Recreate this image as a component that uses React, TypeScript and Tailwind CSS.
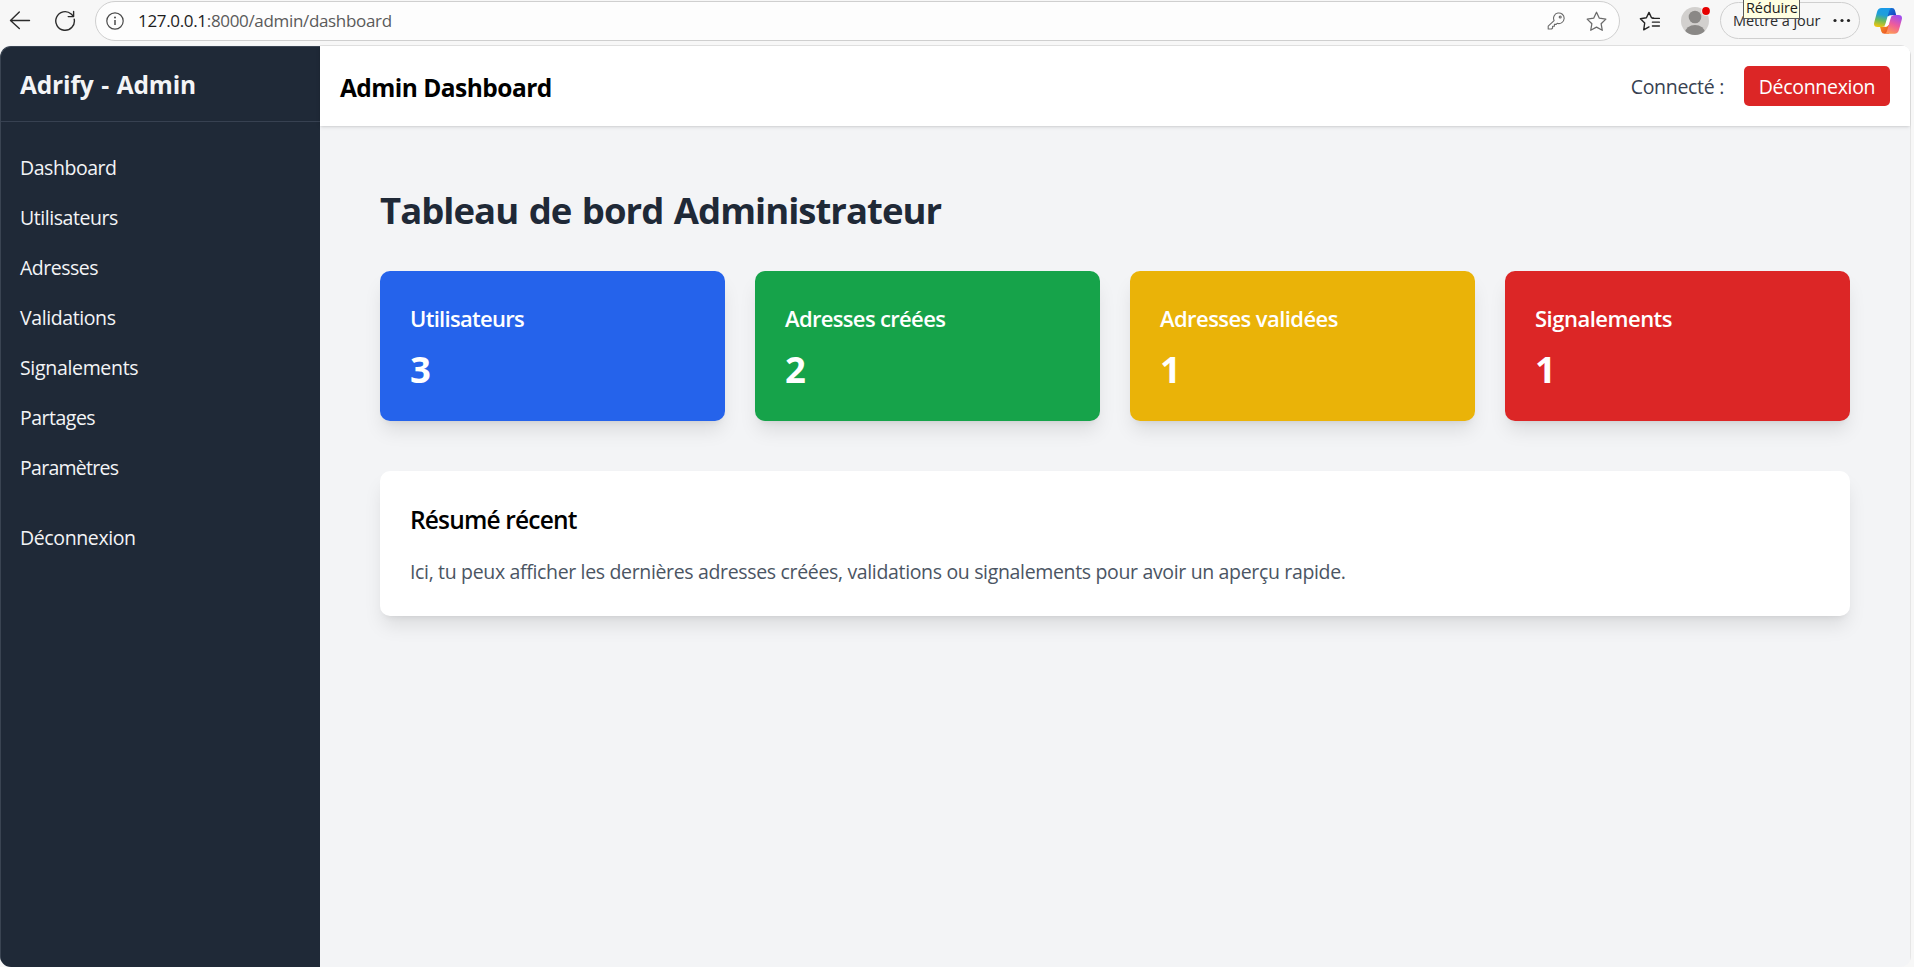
import React from "react";

const navLinks = [
  { label: "Dashboard", tracking: "tracking-[-0.45px]" },
  { label: "Utilisateurs", tracking: "tracking-[-0.45px]" },
  { label: "Adresses", tracking: "tracking-[-0.5px]" },
  { label: "Validations", tracking: "tracking-[-0.4px]" },
  { label: "Signalements", tracking: "tracking-[-0.32px]" },
  { label: "Partages", tracking: "tracking-[-0.5px]" },
  { label: "Paramètres", tracking: "tracking-[-0.72px]" },
];

const stats = [
  { label: "Utilisateurs", value: 3, color: "bg-[#2563eb]", tracking: "tracking-[-0.7px]" },
  { label: "Adresses créées", value: 2, color: "bg-[#16a34a]", tracking: "tracking-[-0.66px]" },
  { label: "Adresses validées", value: 1, color: "bg-[#eab308]", tracking: "tracking-[-0.57px]" },
  { label: "Signalements", value: 1, color: "bg-[#dc2626]", tracking: "tracking-[-0.5px]" },
];

const STAR = "M10 1.2 L12.7 6.9 L18.9 7.7 L14.4 12.1 L15.5 18.4 L10 15.4 L4.5 18.4 L5.6 12.1 L1.1 7.7 L7.3 6.9 Z";

function CopilotLogo() {
  return (
    <svg className="ml-[14px] h-[28px] w-[28px]" viewBox="0 0 28 28">
      <defs>
        <linearGradient id="cpLeft" x1="0.5" y1="0" x2="0.3" y2="1">
          <stop offset="0" stopColor="#1a9be8" />
          <stop offset="0.35" stopColor="#1f9fd8" />
          <stop offset="0.65" stopColor="#6cbb5a" />
          <stop offset="1" stopColor="#f2c50f" />
        </linearGradient>
        <linearGradient id="cpTop" x1="0" y1="0" x2="1" y2="1">
          <stop offset="0" stopColor="#1584e0" />
          <stop offset="1" stopColor="#1638b8" />
        </linearGradient>
        <linearGradient id="cpRight" x1="0.7" y1="0" x2="0.3" y2="1">
          <stop offset="0" stopColor="#a04cf0" />
          <stop offset="0.5" stopColor="#ee5c9c" />
          <stop offset="1" stopColor="#ff9b54" />
        </linearGradient>
        <linearGradient id="cpBottom" x1="0" y1="0" x2="1" y2="1">
          <stop offset="0" stopColor="#f6a21c" />
          <stop offset="1" stopColor="#e8402c" />
        </linearGradient>
      </defs>
      <path d="M13 1 H18 Q20.3 1 21 3.4 L22.2 8 H18.5 Q16 8 15.2 10.6 L12 8 Z" fill="url(#cpTop)" />
      <path d="M15 26.8 H10.5 Q8 26.8 7.3 24.4 L6 19.8 H9.5 Q12 19.8 12.8 17.3 L16 19 Z" fill="url(#cpBottom)" />
      <path d="M7.5 1 H17.3 Q15.8 1.8 15.2 3.8 L11.4 17 Q10.6 19.9 7.6 19.9 H3.5 Q-0.8 19.9 0.2 15.4 L3 5 Q4 1 7.5 1 Z" fill="url(#cpLeft)" />
      <path d="M20.5 26.8 H10.8 Q12.5 26 13 24 L16.8 10.8 Q17.6 8 20.4 8 H24.5 Q28.8 8 27.8 12.4 L25 22.8 Q24 26.8 20.5 26.8 Z" fill="url(#cpRight)" />
      <path d="M14.2 9.2 Q15 8.2 17.6 8.2 Q16.9 9 16.4 10.8 L13.8 19 Q13 19.9 10.2 19.9 Q11.2 19 11.6 17.4 Z" fill="#fff" />
    </svg>
  );
}

function BrowserBar() {
  return (
    <div className="flex h-[45px] shrink-0 items-start overflow-hidden bg-[#f7f7f7]">
      <svg className="mt-[10px] ml-[9px] h-[21px] w-[22px]" viewBox="0 0 22 21" fill="none" stroke="#2b2b2b" strokeWidth="1.4" strokeLinecap="round" strokeLinejoin="round">
        <path d="M20.5 10.5 H1.8 M10.3 2 L1.5 10.5 L10.3 18.5" />
      </svg>
      <svg className="mt-[10px] ml-[23px] h-[22px] w-[22px]" viewBox="0 0 22 22" fill="none" stroke="#2b2b2b" strokeWidth="1.4" strokeLinecap="round" strokeLinejoin="round">
        <path d="M20.2 9.2 A9.3 9.3 0 1 1 17.2 4 L19.4 6.4 M19.6 1.4 V6.6 H14.2" />
      </svg>
      <div className="mt-px ml-[19px] flex h-[40px] w-[1525px] items-center rounded-full border border-[#cfcfcf] bg-[#fdfdfd]">
        <svg className="ml-[10px] h-[18px] w-[18px]" viewBox="0 0 18 18" fill="none" stroke="#4a4a4a" strokeWidth="1.2">
          <circle cx="9" cy="9" r="8.2" />
          <path d="M9 8 V13" strokeWidth="1.5" />
          <circle cx="9" cy="5.4" r="1" fill="#4a4a4a" stroke="none" />
        </svg>
        <div className="mt-[-1px] ml-[14px] text-[17px] leading-[24px] tracking-[-0.33px] whitespace-nowrap text-[#5a5a5a]">
          <span className="text-[#1c1c1c]">127.0.0.1</span>:8000/admin/dashboard
        </div>
        <svg className="ml-auto h-[18px] w-[18px]" viewBox="0 0 18 18" fill="none" stroke="#6a6a6a" strokeWidth="1.1" strokeLinejoin="round">
          <path d="M7.1 8.6 A5.3 5.3 0 1 1 10.2 11.3 L9.2 12.4 H7.4 V14.2 H5.6 V16 L4.6 17 H1.2 V14.2 Z" />
          <circle cx="13.2" cy="5" r="1" />
        </svg>
        <svg className="mr-[12px] ml-[21px] h-[21px] w-[21px]" viewBox="0 0 20 20" fill="none" stroke="#6a6a6a" strokeWidth="1.2" strokeLinejoin="round">
          <path d={STAR} />
        </svg>
      </div>
      <svg className="mt-[11px] ml-[19px] h-[21px] w-[22px]" viewBox="0 0 22 21" fill="none" stroke="#242424" strokeWidth="1.4" strokeLinejoin="round" strokeLinecap="round">
        <path d="M14.6 7.1 L12.5 6.8 L10 1.4 L7.4 6.8 L1.4 7.7 L5.7 12 L4.7 18.8 L10 15.9" />
        <path d="M13.8 7.4 H20.4 M13.4 11.2 H20.4 M13.4 15 H20.4" strokeWidth="1.3" />
      </svg>
      <svg className="mt-[6px] ml-[19px] h-[30px] w-[31px]" viewBox="0 0 31 30">
        <defs>
          <clipPath id="avatarClip">
            <circle cx="15" cy="15" r="14" />
          </clipPath>
        </defs>
        <circle cx="15" cy="15" r="14" fill="#d2d0ce" />
        <g clipPath="url(#avatarClip)" fill="#8a8886">
          <circle cx="15" cy="11" r="6.3" />
          <ellipse cx="15" cy="27" rx="10" ry="8" />
        </g>
        <circle cx="26" cy="5" r="4.8" fill="#f7f7f7" />
        <circle cx="26" cy="5" r="3.9" fill="#e60000" />
      </svg>
      <div className="relative mt-[2px] ml-[9px] flex h-[37px] w-[140px] items-center rounded-full border border-[#cfcfcf]">
        <span className="ml-[12px] w-[86px] text-[14.5px] leading-[20px] tracking-[-0.08px] whitespace-nowrap text-[#2b2b2b]">Mettre à jour</span>
        <svg className="ml-[14px] h-[5px] w-[18px]" viewBox="0 0 18 5" fill="#242424">
          <circle cx="2" cy="2.5" r="1.6" />
          <circle cx="9" cy="2.5" r="1.6" />
          <circle cx="15.5" cy="2.5" r="1.6" />
        </svg>
        <div className="absolute top-[-5px] left-[22px] flex h-[21px] w-[57px] items-center border border-[#5c5c5c] bg-[#ffffe1] pb-[2px] pl-[2px] text-[14.5px] leading-[17px] tracking-[-0.1px] whitespace-nowrap text-[#1c1c1c]">
          Réduire
        </div>
      </div>
      <div className="mt-[7px]">
        <CopilotLogo />
      </div>
    </div>
  );
}

function Sidebar() {
  return (
    <aside className="mt-px w-[320px] shrink-0 rounded-tl-[11px] border-t border-l border-[#3a4452] bg-[#1f2937] text-[#f3f4f6]">
      <div className="flex h-[75px] items-center border-b border-[#374151] pl-[19px]">
        <span className="text-[24.5px] leading-[35px] font-bold tracking-[-0.15px] [word-spacing:1.5px] whitespace-nowrap">Adrify - Admin</span>
      </div>
      <nav className="mt-[21px] flex flex-col">
        {navLinks.map((link) => (
          <a key={link.label} className={`flex h-[50px] items-center pl-[19px] text-[19.5px] leading-[30px] ${link.tracking}`}>
            {link.label}
          </a>
        ))}
        <a className="mt-[20px] flex h-[50px] items-center pl-[19px] text-[19.5px] leading-[30px] tracking-[-0.38px]">Déconnexion</a>
      </nav>
    </aside>
  );
}

function Topbar() {
  return (
    <header className="flex h-[80px] shrink-0 items-center justify-between bg-white px-[20px] shadow-[0_1px_4px_0_rgba(0,0,0,0.12),0_1px_2px_-1px_rgba(0,0,0,0.12)]">
      <h1 className="pt-[2px] text-[24.5px] leading-[35px] font-bold tracking-[-0.53px] whitespace-nowrap text-black">Admin Dashboard</h1>
      <div className="flex items-center gap-[20px]">
        <span className="pt-[2px] text-[19.5px] leading-[30px] tracking-[-0.3px] whitespace-nowrap text-[#374151]">Connecté :</span>
        <button className="flex h-[40px] w-[146px] items-center justify-center rounded-[5px] bg-[#dc2626] pt-[2px] text-[19.5px] tracking-[-0.3px] whitespace-nowrap text-white">
          Déconnexion
        </button>
      </div>
    </header>
  );
}

const cardShadow =
  "shadow-[0_12.5px_18.75px_-3.75px_rgba(0,0,0,0.1),0_5px_7.5px_-5px_rgba(0,0,0,0.1)]";

export default function App() {
  return (
    <div className="flex h-[967px] w-[1914px] flex-col overflow-hidden bg-[#f7f7f7] font-['Open_Sans','Noto_Sans',sans-serif]">
      <BrowserBar />
      <div className="flex h-[922px] w-[1911px] overflow-hidden rounded-[11px] bg-[#f3f4f6]">
        <Sidebar />
        <div className="flex grow flex-col border-t border-r border-[#e6e6e6]">
          <Topbar />
          <main className="flex flex-col px-[60px] pt-[61px]">
            <h2 className="text-[36.5px] leading-[46px] font-bold tracking-[-0.98px] [word-spacing:2px] whitespace-nowrap text-[#1f2937]">Tableau de bord Administrateur</h2>
            <div className="mt-[38px] grid grid-cols-4 gap-[30px]">
              {stats.map((s) => (
                <div key={s.label} className={`h-[150px] rounded-[10px] p-[30px] text-white ${s.color} ${cardShadow}`}>
                  <div className={`text-[22px] leading-[35px] font-semibold whitespace-nowrap ${s.tracking}`}>{s.label}</div>
                  <div className="mt-[11px] text-[36.5px] leading-[45px] font-bold">{s.value}</div>
                </div>
              ))}
            </div>
            <section className={`mt-[50px] h-[145px] rounded-[10px] bg-white px-[30px] pt-[31px] ${cardShadow}`}>
              <h3 className="text-[24.5px] leading-[35px] font-semibold tracking-[-0.83px] whitespace-nowrap text-black">Résumé récent</h3>
              <p className="mt-[20px] text-[19.5px] leading-[30px] tracking-[-0.34px] whitespace-nowrap text-[#4b5563]">
                Ici, tu peux afficher les dernières adresses créées, validations ou signalements pour avoir un aperçu rapide.
              </p>
            </section>
          </main>
        </div>
      </div>
    </div>
  );
}
